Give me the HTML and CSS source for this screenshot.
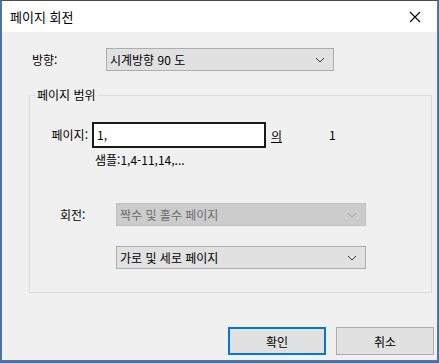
FILE: index.html
```html
<!DOCTYPE html>
<html lang="ko">
<head>
    <meta charset="UTF-8">
    <title>페이지 회전</title>
    <link rel="stylesheet" href="styles.css">
</head>
<body>
    <div class="window">
        <div class="titlebar">
            <span class="title">페이지 회전</span>
            <svg class="close" width="12" height="12" viewBox="0 0 12 12">
                <path d="M1 1 L11 11 M11 1 L1 11" stroke="#000" stroke-width="1.1" fill="none"/>
            </svg>
        </div>

        <div class="client">
            <div class="row direction">
                <span class="label">방향:</span>
                <div class="combo wide">
                    <span>시계방향 90 도</span>
                    <svg class="chev" width="10" height="6" viewBox="0 0 10 6"><path d="M1 1 L5 5 L9 1" stroke="#333" fill="none"/></svg>
                </div>
            </div>

            <fieldset class="group">
                <legend>페이지 범위</legend>

                <div class="row pages">
                    <span class="label">페이지:</span>
                    <div class="edit">1,</div>
                    <span class="of">의</span>
                    <span class="total">1</span>
                </div>
                <div class="sample">샘플:1,4-11,14,...</div>

                <div class="row rotate">
                    <span class="label">회전:</span>
                    <div class="combo disabled">
                        <span>짝수 및 홀수 페이지</span>
                        <svg class="chev" width="10" height="6" viewBox="0 0 10 6"><path d="M1 1 L5 5 L9 1" stroke="#a6a6a6" fill="none"/></svg>
                    </div>
                </div>
                <div class="row orient">
                    <div class="combo">
                        <span>가로 및 세로 페이지</span>
                        <svg class="chev" width="10" height="6" viewBox="0 0 10 6"><path d="M1 1 L5 5 L9 1" stroke="#333" fill="none"/></svg>
                    </div>
                </div>
            </fieldset>

            <div class="buttons">
                <button class="btn btn-default">확인</button>
                <button class="btn">취소</button>
            </div>
        </div>
    </div>
</body>
</html>
```

FILE: styles.css
```css
* {
    margin: 0;
    padding: 0;
    box-sizing: border-box;
}

body {
    background: #4f6f94;
    font-family: "Noto Sans CJK KR", "Noto Sans", sans-serif;
    font-size: 12px;
    color: #000;
}

.window {
    width: 437px;
    height: 361px;
    margin-left: 1px;
    border: 1px solid #4a77be;
    border-top-color: #4a4a4a;
    background: #f0f0f0;
    display: flex;
    flex-direction: column;
}

.titlebar {
    height: 31px;
    background: #fff;
    display: flex;
    align-items: center;
    justify-content: space-between;
    padding: 0 8px 0 8px;
}

.title {
    font-size: 13px;
    line-height: 16px;
    margin-top: 1px;
}

.close {
    margin-right: 8px;
    margin-top: 1px;
}

.client {
    flex: 1;
    padding: 0 3px 0 0;
    display: flex;
    flex-direction: column;
}

.row {
    display: flex;
    align-items: center;
}

.label {
    line-height: 16px;
}

.direction {
    margin-top: 16px;
    height: 23px;
    padding-left: 30px;
}

.direction .label {
    width: 74px;
}

.combo {
    width: 250px;
    height: 23px;
    background: #e1e1e1;
    border: 1px solid #adadad;
    display: flex;
    align-items: center;
    justify-content: space-between;
    padding: 0 8px 0 3px;
    line-height: 16px;
}

.combo.wide {
    width: 228px;
}

.combo.disabled {
    background: #cccccc;
    border-color: #bfbfbf;
    color: #6d6d6d;
}

.chev {
    flex-shrink: 0;
}

.group {
    margin: 16px 0 0 27px;
    width: 403px;
    border: 1px solid #dcdcdc;
    padding: 0 0 23px 0;
}

.group legend {
    margin-left: 5px;
    padding: 0 2px;
    line-height: 16px;
}

.pages {
    margin-top: 19px;
    height: 26px;
}

.pages .label {
    width: 58px;
    text-align: right;
    margin-right: 4px;
}

.edit {
    width: 174px;
    height: 26px;
    background: #fff;
    border: 2px solid #1a1a1a;
    padding-left: 3px;
    line-height: 21px;
}

.of {
    margin-left: 5px;
    text-decoration: underline;
    width: 58px;
}

.total {
    line-height: 16px;
}

.sample {
    margin: 4px 0 0 65px;
    line-height: 16px;
}

.rotate {
    margin-top: 35px;
    padding-left: 30px;
    height: 23px;
}

.rotate .label {
    width: 56px;
}

.orient {
    margin-top: 20px;
    padding-left: 86px;
}

.buttons {
    margin-top: 34px;
    display: flex;
    justify-content: flex-end;
    gap: 10px;
}

.btn {
    width: 98px;
    height: 28px;
    background: #e1e1e1;
    border: 1px solid #adadad;
    font-family: inherit;
    font-size: 12px;
    color: #000;
}

.btn-default {
    border: 2px solid #0078d7;
}
```
